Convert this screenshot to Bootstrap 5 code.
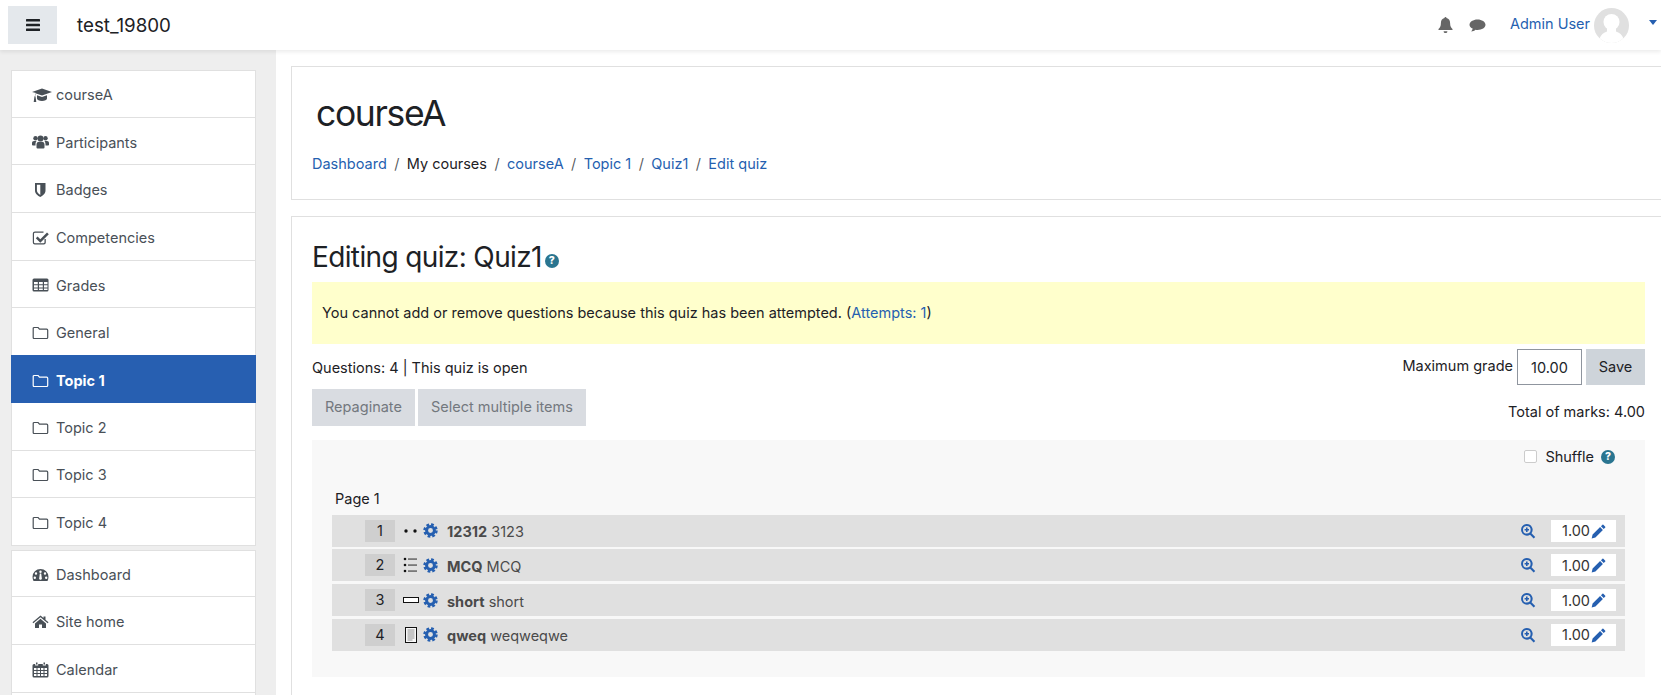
<!DOCTYPE html>
<html lang="en">
<head>
    <meta charset="UTF-8">
    <meta name="viewport" content="width=device-width, initial-scale=1.0">
    <title>Editing quiz: Quiz1</title>
    <link href="https://cdn.jsdelivr.net/npm/bootstrap@5.3.0/dist/css/bootstrap.min.css" rel="stylesheet">
    <style>
        html, body {
            height: 100%;
            overflow: hidden;
        }
        body {
            font-family: Inter, "Liberation Sans", sans-serif;
            font-size: 14.5px;
            color: #1d2125;
            background: #fff;
        }
        a {
            color: #255fb0;
            text-decoration: none;
        }
        .top-bar {
            height: 50px;
            padding: 0 4px 0 8px;
            background: #fff;
            box-shadow: 0 2px 4px rgba(0, 0, 0, .08);
            position: relative;
            z-index: 2;
        }
        .menu-toggle {
            width: 49px;
            height: 38px;
            background: #e4e8ec;
            border: 0;
            border-radius: 0;
            padding: 0;
        }
        .site-name {
            font-size: 18.75px;
            margin: 2px 0 0 20px;
            color: #1d2125;
        }
        .top-icon { fill: #666; display: block; }
        .user-link { font-size: 14.5px; margin-bottom: 2px; }
        .avatar { margin-left: 4px; }
        .user-caret {
            width: 0;
            height: 0;
            margin: 0 0 5px 20px;
            border-left: 4px solid transparent;
            border-right: 4px solid transparent;
            border-top: 5px solid #255fb0;
        }
        .page-wrap {
            height: calc(100% - 50px);
        }
        .side-col {
            width: 276px;
            flex: 0 0 276px;
            background: #eee;
            padding: 20px 20px 0 11px;
        }
        .side-list {
            border-radius: 0;
            margin-bottom: 4px;
        }
        .side-list .list-group-item {
            display: flex;
            align-items: center;
            height: 47.65px;
            padding: 3px 12px 0 20px;
            border-color: #e0e0e0;
            border-radius: 0;
            color: #495057;
            font-size: 14.5px;
        }
        .side-list .list-group-item.active {
            margin-top: -.6px;
            background: #275fb1;
            border-color: #275fb1;
            color: #fff;
            font-weight: 700;
        }
        .side-icon {
            width: 17px;
            height: 16px;
            margin-right: 7px;
            flex: none;
            fill: #495057;
            stroke: none;
        }
        .active .side-icon { fill: #fff; }
        .side-icon.cap-ico {
            width: 20px;
            margin-right: 4px;
        }
        .side-icon.folder-ico {
            fill: none;
            stroke: #495057;
            stroke-width: 1.2;
        }
        .active .side-icon.folder-ico { stroke: #fff; fill: none; }
        .main-col {
            width: 1375px;
            flex: 0 0 1375px;
            margin-left: 15px;
            padding-top: 16px;
        }
        .head-box {
            height: 134px;
            border: 1px solid #e0e0e0;
            border-radius: 0;
            padding: 27px 20px 0 20px;
            margin-bottom: 16px;
        }
        .course-name {
            font-size: 35.5px;
            letter-spacing: -1.35px;
            font-weight: 400;
            margin: 0 0 19px 4px;
            line-height: 40px;
        }
        .head-box .breadcrumb {
            margin: 0;
            font-size: 14.5px;
        }
        .head-box .breadcrumb-item + .breadcrumb-item {
            padding-left: 7.4px;
        }
        .head-box .breadcrumb-item + .breadcrumb-item::before {
            padding-right: 7.4px;
        }
        .quiz-box {
            border: 1px solid #e0e0e0;
            border-radius: 0;
            padding: 23px 20px 24px 20px;
        }
        .quiz-title {
            font-size: 28px;
            letter-spacing: -.63px;
            font-weight: 400;
            line-height: 34px;
            margin: 0 0 8px 0;
        }
        .title-help {
            margin-left: 3px;
            vertical-align: 3px;
        }
        .help-dot {
            display: inline-block;
            width: 14px;
            height: 14px;
            border-radius: 50%;
            background: #2a7590;
            color: #fff;
            font-size: 10.5px;
            font-weight: 800;
            letter-spacing: 0;
            line-height: 14px;
            text-align: center;
        }
        .notice-box {
            background: #ffc;
            height: 62px;
            padding-left: 10px;
            margin-bottom: 5px;
        }
        .status-line {
            padding: 8px 0 10px 0;
        }
        .grade-label {
            margin-top: 6px;
        }
        .grade-input {
            width: 65px;
            height: 36px;
            padding: 0;
            text-align: center;
            border: 1px solid #8f959e;
            border-radius: 0;
            font-size: 14.5px;
            margin: 0 4px 0 4px;
        }
        .save-btn {
            width: 59px;
            height: 36px;
            padding: 0;
            background: #ced4da;
            border: 0;
            border-radius: 0;
            font-size: 14.5px;
            color: #1d2125;
        }
        .tool-btn {
            height: 37px;
            padding: 0 13px;
            background: #d9dce1;
            border: 0;
            border-radius: 0;
            font-size: 14.5px;
            color: #73787e;
            margin-right: 3px;
        }
        .slots-box {
            background: #f8f8f8;
            height: 237px;
            margin-top: 14px;
            padding: 0 20px 0 20px;
        }
        .shuffle-line {
            height: 34px;
            padding-right: 10px;
        }
        .shuffle-line .form-check-input {
            width: 13px;
            height: 13px;
            margin: 0 8px 0 0;
            border-color: #ccc;
            border-radius: 2px;
        }
        .shuffle-line .help-dot { margin-left: 7px; }
        .page-label { padding: 16px 0 0 3px; height: 41px; line-height: 18px; }
        .slot-row {
            height: 32px;
            background: #e0e0e0;
            margin-bottom: 2.67px;
            padding: 0 9px 0 33px;
        }
        .slot-num {
            width: 30px;
            height: 22px;
            line-height: 22px;
            background: #cfcfcf;
            text-align: center;
            margin-right: 8px;
        }
        .qtype-icon { width: 16px; height: 16px; margin-right: 4px; flex: none; }
        .gear-icon { width: 15px; height: 15px; margin-right: 9px; flex: none; }
        .slot-name { color: #4a4a4a; padding-top: 3px; }
        .slot-name b { font-weight: 700; }
        .mark-box {
            width: 65px;
            height: 22px;
            background: #fff;
            margin-left: 15px;
            padding: 1px 0 0 11px;
            line-height: 22px;
            color: #333;
        }
        .zoom-icon { width: 16px; height: 16px; fill: #255fb0; }
        .pencil-icon { width: 15px; height: 15px; fill: #255fb0; margin-left: 1px; }
    </style>
</head>
<body>
    <svg width="0" height="0" class="d-block position-absolute">
        <defs>
            <symbol id="i-gear" viewBox="0 0 16 16">
                <circle cx="8" cy="8" r="4.2" fill="none" stroke="#255fb0" stroke-width="3.2"/>
                <circle cx="8" cy="8" r="6.4" fill="none" stroke="#255fb0" stroke-width="2.6" stroke-dasharray="2.9 2.1"/>
            </symbol>
            <symbol id="i-folder" viewBox="0 0 17 16">
                <path d="M2.2 2.5h3.9l1.4 1.7h7.2q1 0 1 1v7.3q0 1-1 1H2.2q-1 0-1-1V3.5q0-1 1-1z"/>
            </symbol>
            <symbol id="i-zoom" viewBox="0 0 16 16">
                <path fill-rule="evenodd" d="M6.8 1a5.8 5.8 0 0 1 4.7 9.2l3.700 3.700-1.500 1.500-3.700-3.700A5.800 5.800 0 1 1 6.800 1zm0 2a3.800 3.800 0 1 0 0 7.600 3.800 3.800 0 0 0 0-7.600zM6 4.600h1.600V6H9v1.600H7.600V9H6V7.600H4.600V6H6z"/>
            </symbol>
            <symbol id="i-pencil" viewBox="0 0 16 16">
                <path d="M12.200.8q.5-.4 1 0l2 2q.4.5 0 1l-1.600 1.600-3-3zM9.700 3.300l3 3-8 8-4 1.200 1-4.200z"/>
            </symbol>
        </defs>
    </svg>

    <nav class="navbar top-bar d-flex align-items-center justify-content-start flex-nowrap">
        <button class="btn menu-toggle d-flex align-items-center justify-content-center" type="button" aria-label="Menu">
            <svg width="14" height="12" viewBox="0 0 14 12" fill="#1d2125"><rect width="14" height="2.400" rx=".5"/><rect y="4.800" width="14" height="2.400" rx=".5"/><rect y="9.600" width="14" height="2.400" rx=".5"/></svg>
        </button>
        <a class="site-name" href="#">test_19800</a>
        <div class="ms-auto d-flex align-items-center">
            <svg class="top-icon me-3" width="15" height="16" viewBox="0 0 15 16"><path d="M7.500 0a1 1 0 0 1 1 1.100c2.500.5 3.600 2.500 3.600 5 0 3.600 1 4.700 2.400 6v1H.5v-1c1.400-1.300 2.400-2.400 2.400-6 0-2.500 1.100-4.500 3.600-5A1 1 0 0 1 7.500 0zM5.600 14.200h3.800a1.900 1.900 0 0 1-3.800 0z"/></svg>
            <svg class="top-icon" width="17" height="15" viewBox="0 0 17 15"><path d="M8.500 1.500c4.400 0 8 2.300 8 5.200s-3.600 5.200-8 5.200c-.7 0-1.300 0-2-.2-1 .9-2.600 1.700-4.300 1.700.8-.8 1.300-1.700 1.500-2.800C1.800 9.700.5 8.300.5 6.700c0-2.900 3.600-5.200 8-5.200z"/></svg>
            <a class="user-link ms-4" href="#">Admin User</a>
            <svg class="avatar" width="35" height="35" viewBox="0 0 35 35"><defs><clipPath id="av"><circle cx="17.500" cy="17.500" r="17.500"/></clipPath></defs><circle cx="17.500" cy="17.500" r="17.500" fill="#e0e0e0"/><g clip-path="url(#av)"><circle cx="17.500" cy="14" r="8" fill="#fff"/><path d="M5 35c0-8 5-12 12.500-12S30 27 30 35z" fill="#fff"/><path d="M13 19h9v5l-4.500 3-4.500-3z" fill="#fff"/></g></svg>
            <span class="user-caret"></span>
        </div>
    </nav>

    <div class="page-wrap d-flex overflow-hidden">
        <aside class="side-col">
            <div class="list-group side-list">
                <a href="#" class="list-group-item"><svg class="side-icon cap-ico" viewBox="0 0 20 16"><path d="M10 1.500 20 5l-10 3.500-5.800-2c-.6.600-1 1.600-1.100 2.700.4.200.6.500.5.900l.7 5H1.700l.7-5c-.1-.4.100-.7.400-.9.100-1.300.6-2.400 1.200-3.300L0 5zM5 8.300l5 1.700 5-1.700v3.200c0 1.400-2.300 2.500-5 2.500s-5-1.100-5-2.500z"/></svg>courseA</a>
                <a href="#" class="list-group-item"><svg class="side-icon" viewBox="0 0 17 16"><circle cx="3.500" cy="4.300" r="2.200"/><circle cx="13.500" cy="4.300" r="2.200"/><circle cx="8.500" cy="4.500" r="3"/><path d="M0 11V9c0-1.300.8-2 2-2h2.500C3.800 8 3.500 9 3.500 10.500v.9H1q-1 0-1-.4zM17 11V9c0-1.300-.8-2-2-2h-2.500c.7 1 1 2 1 3.500v.9H16q1 0 1-.4zM4.500 13.500v-3c0-1.700 1-2.800 2.500-2.800h3c1.500 0 2.500 1.100 2.500 2.800v3q0 1-1 1h-6q-1 0-1-1z"/></svg>Participants</a>
                <a href="#" class="list-group-item"><svg class="side-icon" viewBox="0 0 17 16"><path fill-rule="evenodd" d="M3 1h10.500v7.500c0 3.200-3 5.300-5.200 6.500C6 13.800 3 11.700 3 8.500zm5.300 1.800H4.900v5.700c0 1.900 1.700 3.400 3.400 4.400z" /></svg>Badges</a>
                <a href="#" class="list-group-item"><svg class="side-icon" viewBox="0 0 17 16"><path d="M3 1.500h8.500v1.300H3q-1 0-1 1v8.500q0 1 1 1h8.500q1 0 1-1V9h1.300v3.500q0 2-2 2H2.800q-2 0-2-2V3.500q0-2 2.200-2zM15 2.500l1.800 1.800-8.500 8.500-4.500-4.500L5.600 6.500l2.700 2.700z"/></svg>Competencies</a>
                <a href="#" class="list-group-item"><svg class="side-icon" viewBox="0 0 17 16"><path fill-rule="evenodd" d="M2 1.500h13q1.500 0 1.500 1.500v10q0 1.500-1.500 1.500H2Q.5 14.500.5 13V3Q.5 1.500 2 1.500zM2 5v2.200h3.800V5zm5 0v2.200h3.800V5zm5 0v2.200h3.500V5zM2 8.200v2.200h3.800V8.200zm5 0v2.200h3.800V8.200zm5 0v2.200h3.500V8.200zM2 11.400V13h3.800v-1.600zm5 0V13h3.800v-1.600zm5 0V13h3.500v-1.600z"/></svg>Grades</a>
                <a href="#" class="list-group-item"><svg class="side-icon folder-ico"><use href="#i-folder"/></svg>General</a>
                <a href="#" class="list-group-item active"><svg class="side-icon folder-ico"><use href="#i-folder"/></svg>Topic 1</a>
                <a href="#" class="list-group-item"><svg class="side-icon folder-ico"><use href="#i-folder"/></svg>Topic 2</a>
                <a href="#" class="list-group-item"><svg class="side-icon folder-ico"><use href="#i-folder"/></svg>Topic 3</a>
                <a href="#" class="list-group-item"><svg class="side-icon folder-ico"><use href="#i-folder"/></svg>Topic 4</a>
            </div>
            <div class="list-group side-list">
                <a href="#" class="list-group-item"><svg class="side-icon" viewBox="0 0 17 16"><path fill-rule="evenodd" d="M8.500 2a8 8 0 0 1 8 8c0 1.500-.4 2.800-1 4H1.500c-.6-1.200-1-2.500-1-4a8 8 0 0 1 8-8zM8.500 3.500a1.200 1.200 0 1 0 0 2.400 1.200 1.200 0 0 0 0-2.400zM4 5.300a1.200 1.200 0 1 0 0 2.400 1.200 1.200 0 0 0 0-2.400zm9 0a1.200 1.200 0 1 0 0 2.400 1.200 1.200 0 0 0 0-2.400zM2.800 9.500a1.200 1.200 0 1 0 0 2.400 1.200 1.200 0 0 0 0-2.400zm11.400 0a1.200 1.200 0 1 0 0 2.400 1.200 1.200 0 0 0 0-2.400zM7.800 6.500 7.300 10.600a1.400 1.400 0 1 0 2.400 0L9.200 6.500z"/></svg>Dashboard</a>
                <a href="#" class="list-group-item"><svg class="side-icon" viewBox="0 0 17 16"><path d="M8.500 1.500l3 2.500V2.500h2v3.200l3 2.500-.8 1-7.200-6-7.200 6-.8-1zM8.500 4.800l5.500 4.600v4.600h-4v-3.500H7V14H3V9.400z"/></svg>Site home</a>
                <a href="#" class="list-group-item"><svg class="side-icon" viewBox="0 0 17 16"><path fill-rule="evenodd" d="M4 .5h1.500v2H4zM11.500.5H13v2h-1.500zM2 2h1.200v1.400h3V2h4.600v1.400h3V2H15q1.500 0 1.500 1.500V14q0 1.500-1.500 1.500H2Q.5 15.500.5 14V3.500Q.5 2 2 2zM2 6v2h2.500V6zm3.500 0v2h2.500V6zm3.500 0v2h2.500V6zm3.500 0v2H15V6zM2 9v2h2.500V9zm3.500 0v2h2.500V9zm3.500 0v2h2.500V9zm3.500 0v2H15V9zM2 12v2h2.500v-2zm3.500 0v2h2.500v-2zm3.500 0v2h2.500v-2zm3.500 0v2H15v-2z"/></svg>Calendar</a>
                <span class="list-group-item"></span>
            </div>
        </aside>

        <main class="main-col">
            <div class="card head-box">
                <h1 class="course-name">courseA</h1>
                <ol class="breadcrumb">
                    <li class="breadcrumb-item"><a href="#">Dashboard</a></li>
                    <li class="breadcrumb-item">My courses</li>
                    <li class="breadcrumb-item"><a href="#">courseA</a></li>
                    <li class="breadcrumb-item"><a href="#">Topic 1</a></li>
                    <li class="breadcrumb-item"><a href="#">Quiz1</a></li>
                    <li class="breadcrumb-item"><a href="#">Edit quiz</a></li>
                </ol>
            </div>
            <div class="card quiz-box">
                <h2 class="quiz-title">Editing quiz: Quiz1<span class="help-dot title-help">?</span></h2>
                <div class="notice-box d-flex align-items-center">
                    <span>You cannot add or remove questions because this quiz has been attempted. (<a href="#">Attempts: 1</a>)</span>
                </div>
                <div class="d-flex justify-content-between">
                    <div>
                        <div class="status-line">Questions: 4 | This quiz is open</div>
                        <div class="d-flex">
                            <button class="btn tool-btn" type="button">Repaginate</button>
                            <button class="btn tool-btn" type="button">Select multiple items</button>
                        </div>
                    </div>
                    <div class="text-end">
                        <div class="d-flex align-items-start justify-content-end">
                            <label for="maxgrade" class="grade-label">Maximum grade</label>
                            <input id="maxgrade" class="form-control grade-input" value="10.00">
                            <button class="btn save-btn" type="button">Save</button>
                        </div>
                        <div class="pt-3">Total of marks: 4.00</div>
                    </div>
                </div>
                <div class="slots-box">
                    <div class="shuffle-line d-flex align-items-center justify-content-end">
                        <input class="form-check-input" type="checkbox" id="shuffle">
                        <label for="shuffle">Shuffle</label>
                        <span class="help-dot">?</span>
                    </div>
                    <div class="page-label">Page 1</div>

                    <div class="slot-row d-flex align-items-center">
                        <span class="slot-num">1</span>
                        <svg class="qtype-icon" viewBox="0 0 16 16"><circle cx="3" cy="8" r="1.700" fill="#111"/><circle cx="12" cy="8" r="1.700" fill="#111"/></svg>
                        <svg class="gear-icon"><use href="#i-gear"/></svg>
                        <span class="slot-name"><b>12312</b> 3123</span>
                        <svg class="zoom-icon ms-auto"><use href="#i-zoom"/></svg>
                        <span class="mark-box d-flex align-items-center">1.00<svg class="pencil-icon"><use href="#i-pencil"/></svg></span>
                    </div>
                    <div class="slot-row d-flex align-items-center">
                        <span class="slot-num">2</span>
                        <svg class="qtype-icon" viewBox="0 0 16 16" fill="#111"><circle cx="2" cy="2" r="1.300"/><circle cx="2" cy="8" r="1.300"/><circle cx="2" cy="14" r="1.300"/><rect x="5" y="1.600" width="9" height=".9"/><rect x="5" y="7.600" width="9" height=".9"/><rect x="5" y="13.600" width="9" height=".9"/></svg>
                        <svg class="gear-icon"><use href="#i-gear"/></svg>
                        <span class="slot-name"><b>MCQ</b> MCQ</span>
                        <svg class="zoom-icon ms-auto"><use href="#i-zoom"/></svg>
                        <span class="mark-box d-flex align-items-center">1.00<svg class="pencil-icon"><use href="#i-pencil"/></svg></span>
                    </div>
                    <div class="slot-row d-flex align-items-center">
                        <span class="slot-num">3</span>
                        <svg class="qtype-icon" viewBox="0 0 16 16"><rect x=".5" y="5.500" width="15" height="5" fill="#fff" stroke="#111"/></svg>
                        <svg class="gear-icon"><use href="#i-gear"/></svg>
                        <span class="slot-name"><b>short</b> short</span>
                        <svg class="zoom-icon ms-auto"><use href="#i-zoom"/></svg>
                        <span class="mark-box d-flex align-items-center">1.00<svg class="pencil-icon"><use href="#i-pencil"/></svg></span>
                    </div>
                    <div class="slot-row d-flex align-items-center">
                        <span class="slot-num">4</span>
                        <svg class="qtype-icon" viewBox="0 0 16 16"><rect x="2.500" y=".5" width="11" height="15" fill="#f8f8f8" stroke="#111"/><path d="M4.500 3h7M4.500 5h7M4.500 7h7M4.500 9h7M4.500 11h7M4.500 13h5" stroke="#777" stroke-width=".8"/></svg>
                        <svg class="gear-icon"><use href="#i-gear"/></svg>
                        <span class="slot-name"><b>qweq</b> weqweqwe</span>
                        <svg class="zoom-icon ms-auto"><use href="#i-zoom"/></svg>
                        <span class="mark-box d-flex align-items-center">1.00<svg class="pencil-icon"><use href="#i-pencil"/></svg></span>
                    </div>
                </div>
            </div>
        </main>
    </div>
    <script src="https://cdn.jsdelivr.net/npm/bootstrap@5.3.0/dist/js/bootstrap.bundle.min.js"></script>
</body>
</html>
